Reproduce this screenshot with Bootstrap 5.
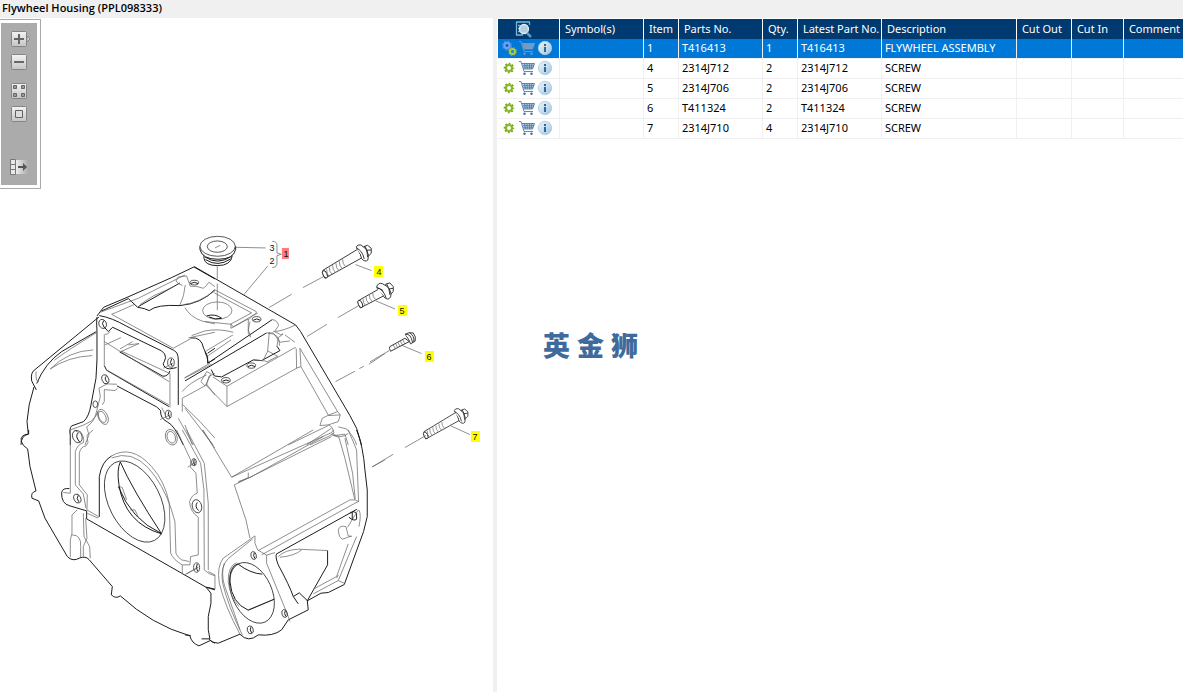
<!DOCTYPE html>
<html lang="en">
<head>
<meta charset="utf-8">
<meta name="viewport" content="width=device-width, initial-scale=1">
<title>Flywheel Housing (PPL098333)</title>
<link href="https://cdn.jsdelivr.net/npm/bootstrap@5.3.0/dist/css/bootstrap.min.css" rel="stylesheet">
<style>
body{font-family:"Noto Sans","Open Sans",sans-serif;font-size:11px;line-height:18px;color:#000;background:#fff}
.titlebar{background:#f0f0f0;font-size:11px;line-height:16px;height:18px;font-family:"Open Sans","Noto Sans",sans-serif;font-weight:600;padding-left:2px}
.tools{top:1px;left:0;border:1px solid #aaa;border-left:0;padding:3px 3px 3px 1px;background:#fff}
.tools-in{background:#ababab;width:36px;height:162px;padding-top:8px}
.icon-btn{border:0;background:none;padding:0;display:block;line-height:0}
.icon-btn svg{display:block}
.tool-gap{margin-top:7px}
.tool-sp{margin-top:13px}
.tool-last{margin-top:37px}
.drawing{display:block;width:100%;height:auto}
.parts-pane{border-left:4px solid #f0f0f0;padding:1px 0 0 1px}
.parts{table-layout:fixed;width:100%;border-collapse:separate;border-spacing:0}
.parts th,.parts td{height:20px;padding:0 0 1px 3px;border-right:1px solid #f0f0f0;border-bottom:1px solid #f0f0f0;white-space:nowrap;line-height:18px;overflow:hidden}
.parts td{line-height:16px}
.parts th{background:#003a70;color:#fff;font-weight:400;border-right-color:#fff;border-bottom:0;padding:0 0 0 5px;line-height:20px}
.parts tr>:last-child{border-right:0}
.parts .picked td{background:#0078d7;color:#fff}
.parts .search-cell{padding:0 10px 0 0}
.row-icons{gap:2px}
.cart-line{stroke:var(--cart,#4c7cae)}
.cart-wheel{fill:var(--cart,#41699a)}
.picked{--cart:#8593ad}
.c-icon{width:62px}.c-symbol{width:84px}.c-num{width:35px}.c-part{width:84px}.c-desc{width:135px}.c-out{width:55px}.c-in{width:52px}
.brandmark{font-family:"Noto Sans CJK SC",sans-serif;font-weight:900;font-size:27px;line-height:32px;color:#3e6a9c;gap:7px;margin:190px 0 0 45px}
.dk{stroke:#1c1c1c;stroke-width:3}
ellipse.dk{stroke-width:2.2}
.th{stroke:#666;stroke-width:2.2}
.bolt .dk{stroke-width:2.6}
.callout{font-family:"Liberation Sans",sans-serif;font-size:9px;text-anchor:middle;fill:#111}
</style>
</head>
<body class="overflow-hidden">
<svg width="0" height="0" class="position-absolute" aria-hidden="true">
<defs>
<linearGradient id="face" x2="0" y2="1"><stop stop-color="#f4f4f4"/><stop offset="1" stop-color="#c4c4c4"/></linearGradient>
<linearGradient id="fade"><stop stop-color="#eee"/><stop offset="1" stop-color="#ababab"/></linearGradient>
<linearGradient id="orb" x2="1" y2="1"><stop stop-color="#eef7fc"/><stop offset="1" stop-color="#9fc4e0"/></linearGradient>
<symbol id="gear" viewBox="0 0 16 16"><circle cx="8" cy="8" r="3" fill="none" stroke="#8aba2c" stroke-width="2.2"/><circle cx="8" cy="8" r="4.500" fill="none" stroke="#7aa822" stroke-width="1.600" stroke-dasharray="1.900 1.634" stroke-dashoffset=".95"/></symbol>
<symbol id="gears" viewBox="0 0 16 16"><circle cx="6" cy="5.500" r="2.600" fill="none" stroke="#6aa5f5" stroke-width="2.400"/><circle cx="6" cy="5.500" r="4.200" fill="none" stroke="#5a8de8" stroke-width="1.600" stroke-dasharray="1.800 1.500"/><circle cx="6" cy="5.500" r="1.300" fill="#2458b8"/><circle cx="11.500" cy="11.500" r="2.500" fill="none" stroke="#a9cf55" stroke-width="2"/><circle cx="11.500" cy="11.500" r="3.700" fill="none" stroke="#93bb40" stroke-width="1.300" stroke-dasharray="1.600 1.300"/><circle cx="11.500" cy="11.500" r="1.200" fill="#4084c4"/></symbol>
<symbol id="cart" viewBox="0 0 16 16"><path d="M3 3.500H15.500L13.500 9H5Z" fill="#a9c3df" fill-opacity=".6"/><path class="cart-line" d="M0 1.500H2L5 11.500H14M3 3.500H15.500L13.500 9H4.300M3.700 5.300H14.800M4 7.200H14.200M5.500 3.500L6.300 9M8 3.500L8.300 9M10.500 3.500V9M13 3.500L12 9" fill="none" stroke-width=".9"/><circle class="cart-wheel" cx="5.500" cy="13.700" r="1.200"/><circle class="cart-wheel" cx="12.500" cy="13.700" r="1.200"/></symbol>
<symbol id="info" viewBox="0 0 16 16"><circle cx="8" cy="8" r="6.700" fill="url(#orb)" stroke="#a9c9e2" stroke-width=".8"/><path d="M8 4v2M8 7v5" fill="none" stroke="#35679d" stroke-width="2"/></symbol>
</defs>
</svg>

<header class="titlebar">Flywheel Housing (PPL098333)</header>
<main class="row g-0">
<section class="col-5 position-relative" aria-label="Drawing">
<svg class="drawing" viewBox="0 18 493 674" fill="none" stroke-linejoin="round" role="img" aria-label="Flywheel housing exploded view">
<!-- left upper housing -->
<g transform="translate(15 225) scale(.3333)">
<path class="dk" d="M246 273L266 247L330 220L470 158L537 126L600 162M260 258L340 221L368 247M246 276Q244 290 246 320V405L243 460L228 540Q222 575 206 590L170 603Q162 610 166 632V660M253 272Q290 278 335 304L476 376M252 276L60 434Q46 442 50 468L64 495M244 320L140 380Q90 415 65 476M57 486Q39 540 36 590L40 628Q18 632 18 660"/>
<path class="dk" d="M368 247Q390 250 403 257Q425 238 495 242Q560 236 600 194M268 307L280 320L293 307L440 378Q452 386 452 398M314 381L444 454Q460 454 465 438M268 422L275 436L462 545M476 376Q490 382 490 405V540M452 398Q448 412 445 416Q446 430 464 432L485 428M306 483L425 546L437 557Q435 580 457 591Q478 600 505 660M600 370L578 385M526 339Q560 335 566 370L578 395V415L600 402"/>
<path class="dk" d="M370 245L495 174"/>
<path class="th" d="M256 262L370 220L510 150M375 239L417 212Q450 198 480 183M511 180Q508 215 495 240M503 182Q490 178 483 168L490 156L515 153L526 184Q545 182 565 190Q576 182 582 172L600 185M510 248Q525 275 560 288L600 297M290 268L305 262L357 239M290 268L475 370L526 342M340 360L372 356L318 380M318 378L465 446M315 372L353 350M268 328V422M270 360L318 338M270 328H276L286 320M268 350L462 470M273 434L462 540M465 446V548M502 500Q520 475 575 450M502 560V520L575 480L582 454L600 446M508 460L590 418M575 478L600 510M502 538Q560 592 600 640M490 580L535 660M106 432Q160 378 235 375M106 432Q160 395 232 392M246 322Q155 378 118 406M63 440Q62 475 72 470M252 490L276 477L306 478M252 490L256 515Q250 540 243 566Q238 590 215 606L222 630L210 660M268 494V530L262 540M308 490L300 497L268 494M166 615L207 600L230 588Q245 573 249 560M440 548L452 570M520 339L600 322"/>
<ellipse class="dk" cx="263" cy="297" rx="11" ry="14" transform="rotate(-25 263 297)"/><path class="dk" d="M266 287q-8 8 2 21"/>
<ellipse class="dk" cx="468" cy="413" rx="10" ry="14"/><path class="th" d="M445 430L475 414M436 584L467 569"/><path class="dk" d="M470 402q-8 10 2 22"/>
<ellipse class="dk" cx="271" cy="463" rx="10" ry="14" transform="rotate(-20 271 463)"/><path class="dk" d="M274 454q-8 8 4 19"/>
<ellipse class="dk" cx="241" cy="538" rx="7" ry="10"/>
<ellipse class="dk" cx="460" cy="569" rx="9" ry="13"/><path class="dk" d="M462 559q-6 10 3 20"/>
<ellipse class="dk" cx="187" cy="635" rx="14" ry="19" transform="rotate(-20 187 635)"/><path class="dk" d="M191 623q-13 10 3 28"/>
<ellipse class="th" cx="264" cy="576" rx="14" ry="24" transform="rotate(-25 264 576)"/><ellipse class="th" cx="262" cy="576" rx="10" ry="18" transform="rotate(-25 262 576)"/>
<ellipse class="th" cx="469" cy="637" rx="17" ry="24" transform="rotate(-20 469 637)"/><ellipse class="th" cx="469" cy="637" rx="12" ry="18" transform="rotate(-20 469 637)"/>
</g>
<!-- right upper housing, plug and bolts -->
<g transform="translate(185 225) scale(.3333)">
<path class="dk" d="M28 125L332 300L347 320L495 572L515 610L530 660M60 380L66 396L70 414L262 284M0 468L245 324M79 434L88 453L110 456L205 405L230 407L285 377L276 364"/>
<path class="th" d="M195 290L190 315L197 335M332 300Q290 320 265 320M0 458L75 415M0 238Q35 236 90 198M90 195L214 260Q216 264 210 268L145 306L138 297L200 264L88 204M60 290L138 298M138 298V310L190 282V325L197 337M20 332L60 318Q100 310 145 322M64 378L144 330M70 392L138 345M192 284Q200 270 218 265M262 284Q278 286 281 302L270 318M253 322L248 380L235 405M248 378L278 394L248 410M246 324H265L285 352L315 348M270 320L288 330Q305 320 280 338L276 365M300 330L330 352M250 325Q285 325 284 362M79 446L62 480L126 545L335 430L334 372M126 545V484L84 456M126 484L330 368L334 370M345 370L458 560M345 370L348 425L430 570M334 430L348 425M458 560L466 570L430 572M458 560Q430 570 412 580L405 602L430 600L460 590L466 570M430 602L310 660M440 610L365 660M430 600Q445 605 447 625L430 635L375 660M460 606L485 612Q510 640 515 660M447 632L480 628L490 660M0 550L84 660M0 600L22 660M48 470L65 440L77 446M48 470L60 483M205 405L240 408L250 412"/>
<ellipse class="th" cx="97" cy="257" rx="44" ry="26"/><path class="dk" d="M65 273Q90 265 110 280M72 276Q90 286 110 280"/>
<ellipse class="dk" cx="28" cy="173" rx="13" ry="7"/><path class="dk" d="M17 176q11-8 22 0"/><ellipse class="dk" cx="215" cy="283" rx="13" ry="8"/><path class="dk" d="M205 286q10-8 21 0"/><ellipse class="dk" cx="199" cy="422" rx="13" ry="8"/><path class="dk" d="M189 425q10-8 21 0"/><ellipse class="dk" cx="123" cy="466" rx="13" ry="8"/><path class="dk" d="M113 469q10-8 21 0"/>
<path class="th" d="M97 124V162M97 176V256M150 67L242 69M248 124L176 210M252 248L320 208M354 188L425 150M366 335L426 298M459 278L525 240M452 470L510 439M523 431L537 424M552 418L600 386M512 119L560 137"/>
<g fill="#fff"><path class="dk" d="M57 90V100Q60 122 98 122Q138 122 142 92Z"/><path class="dk" d="M60 96Q98 122 140 94M62 104Q98 128 137 102"/><path class="dk" d="M45 64V74Q52 103 99 103Q146 103 152 74V64"/><ellipse class="dk" cx="98" cy="64" rx="53" ry="30"/><ellipse class="dk" cx="97" cy="65" rx="30" ry="17"/><path class="th" d="M90 69L106 61"/></g>
<path class="th" d="M262 49Q276 50 276 60V84L289 88L276 92V118Q274 128 262 128"/>
</g>
<defs><g id="bolt" class="bolt" fill="#fff">
<path class="dk" d="M518 73L414 136Q412 146 420 160L532 98Z"/>
<path class="th" d="M425 133q0 15 8 22m0-28q0 15 9 22m1-28q0 15 9 22m1-28q0 15 9 22m1-28q0 15 9 22m1-28q0 15 9 22"/><ellipse class="dk" cx="420" cy="148" rx="6" ry="12" transform="rotate(-25 420 148)"/>
<path class="dk" d="M537 65L548 61L559 70V85L548 96L532 91Z"/><path class="dk" d="M514 66Q517 58 528 60L543 72Q555 90 549 105Q541 113 530 101L524 80Z"/><path class="dk" d="M540 63L546 76L559 75M546 76L548 96M514 70Q532 75 538 102"/>
</g></defs>
<use href="#bolt" transform="translate(185 225) scale(.3333)"/>
<use href="#bolt" transform="translate(298.600 390.600) scale(.303)"/>
<g class="bolt" fill="#fff" transform="translate(370 230) scale(.3333)">
<path class="dk" d="M27 177L-31 210Q-37 216 -29 234L41 198Z"/><path class="th" d="M-21 206q0 14 8 21m1-28q0 15 9 22m1-28q0 15 9 22m1-28q0 15 9 22"/><path class="dk" d="M48 162L60 159L70 170V185L60 195L45 193Z"/><path class="dk" d="M20 172Q24 157 37 161L52 170Q67 185 62 201Q54 214 42 201L37 180Z"/><path class="dk" d="M51 163L57 177L70 175M57 177L60 195M20 174Q40 176 49 205"/><ellipse class="dk" cx="-29" cy="222" rx="6" ry="12" transform="rotate(-25 -29 222)"/>
<path class="dk" d="M105 325L60 350Q56 354 62 364L118 335Z"/><path class="th" d="M70 345l7 13m0-17l7 13m0-17l7 13m0-17l7 13m0-17l7 13"/><path class="dk" d="M106 313Q116 306 130 309Q139 320 136 333L122 342L117 330Z"/><path class="dk" d="M106 313Q123 310 128 338M119 309Q134 317 132 337"/>
<path class="th" d="M18 213L75 237M95 346L155 371M243 588L300 614M0 396L58 362M7 711L70 673M105 653L168 617"/>
</g>
<!-- left lower housing -->
<g transform="translate(15 430) scale(.3333)">
<path class="dk" d="M41 0V12Q14 15 19 35Q23 48 38 57L45 110L63 183Q46 188 51 205L71 213L90 265L157 380Q173 397 195 384Q212 378 222 389L292 470L289 495Q302 508 316 498Q410 585 525 618Q530 640 552 648L586 632L600 640M560 627H585L580 600V560L588 520V490L573 472L500 430L215 267V243L165 228Q138 222 140 187Q143 174 163 176M253 261V140Q260 95 290 78M316 96Q305 120 312 165Q330 280 440 312M316 96Q350 175 440 312M573 472L600 480M310 170Q350 270 438 310"/>
<path class="th" d="M166 0V190L145 188M177 0L190 8M194 3Q210 20 205 38Q187 44 181 65V165L205 192L213 235M235 0L216 16L219 38L213 48Q197 50 193 70V165L217 195L216 240L250 260M187 240L171 255V310L166 330V382M205 250L207 320L224 350L226 385M171 315Q200 315 197 350V382M212 265L216 325L205 350V380M217 250L247 264L253 260M290 78Q350 43 410 110Q450 155 463 220L467 370Q475 390 502 405L525 405L527 380L550 375V262Q525 245 524 215Q530 195 547 190L543 130L527 112V90L485 0M290 84Q350 60 401 115Q445 165 468 235L480 275L483 370Q487 382 500 390L523 395M502 405V432M516 432L550 412M518 112L545 95M502 0L557 100L567 180L568 420Q580 433 600 438M515 0L568 100L580 220V420M562 0L600 55"/>
<ellipse class="dk" cx="359" cy="215" rx="77" ry="131" transform="rotate(-27 359 215)"/>
<ellipse class="dk" cx="187" cy="206" rx="10" ry="14" transform="rotate(-25 187 206)"/><path class="dk" d="M190 196q-8 10 2 20"/>
<ellipse class="dk" cx="537" cy="97" rx="7" ry="11"/><path class="dk" d="M538 88q-4 9 1 18M547 218q-9 12 4 24"/><ellipse class="dk" cx="546" cy="229" rx="14" ry="20" transform="rotate(-15 546 229)"/><ellipse class="dk" cx="545" cy="413" rx="9" ry="14"/><path class="dk" d="M547 402q-6 12 1 22"/>
<path class="th" d="M314 170L322 173L335 210M345 240L360 240L372 266"/>
</g>
<!-- right lower housing -->
<g transform="translate(185 430) scale(.3333)">
<path class="dk" d="M515 0Q535 50 540 120L547 180V260L536 305L478 464L430 488L408 490L367 513M516 238L275 372Q270 380 280 405Q315 470 325 500L343 489L367 512L370 540L310 570L290 600Q265 620 220 615Q190 640 165 613L100 640Q80 640 72 628M65 472L90 478M0 615L17 617M367 513L428 405V362M325 500L340 522"/>
<path class="th" d="M54 0L140 142L440 8L445 0M140 142L385 0M148 165L240 120L440 20M160 155L195 143L415 20M190 128V143L160 158M148 165L183 270L195 325M440 10Q470 30 490 10M440 15L462 22L480 85L510 210M490 0L515 60L521 215L510 210L495 210L220 362M521 215L510 220L230 375M480 25L503 130L511 207M280 380Q300 360 340 358L428 362M285 382Q330 378 350 360M385 478L455 440L490 342M385 492L460 452L478 460M460 435L455 445M515 320L460 452M460 300Q465 285 483 290L490 318L500 320M460 300Q462 325 473 328L500 318M488 292L520 240M522 240Q530 255 522 290M210 318V340L218 360L245 376V400L310 560L315 575M245 376L270 368M210 318L115 385Q95 410 103 460Q120 530 165 613M203 327L130 386Q105 410 113 460Q130 530 172 615M118 400Q108 430 118 465L148 550L165 600M70 425L90 435V478M0 434L40 412M190 540L268 508M562 111L600 90"/>
<ellipse class="dk" cx="201" cy="489" rx="60" ry="96" transform="rotate(-24 201 489)"/><path class="dk" d="M160 403Q195 430 232 433M160 401Q132 410 135 455Q140 520 190 541L268 508"/><path class="th" d="M155 398Q128 410 130 455Q135 500 162 530"/>
<ellipse class="dk" cx="206" cy="377" rx="8" ry="12" transform="rotate(-15 206 377)"/><path class="dk" d="M208 369q-5 8 2 17"/><ellipse class="dk" cx="299" cy="551" rx="8" ry="12" transform="rotate(-15 299 551)"/><path class="dk" d="M301 543q-5 8 2 17"/><ellipse class="dk" cx="196" cy="600" rx="9" ry="12" transform="rotate(-15 196 600)"/><path class="dk" d="M198 592q-5 8 2 17"/>
<path class="dk" d="M495 250Q509 240 515 252V268Q507 275 492 262M502 247V270"/>
</g>
<path fill="#ff0" d="M374 266h9v11h-9zM398 305h9v11h-9zM425 351h9v11h-9zM471 431h9v11h-9z"/><path fill="#ff7b7b" d="M282 248h7v11h-7z"/>
<g class="callout"><text x="272" y="251">3</text><text x="272" y="264">2</text><text x="286" y="257">1</text><text x="379" y="275">4</text><text x="402" y="314">5</text><text x="429" y="360">6</text><text x="475" y="440">7</text></g>
</svg>
<div class="tools position-absolute"><div class="tools-in">
<button class="icon-btn" aria-label="Zoom in"><svg width="36" height="16"><path d="M26 5l3 3-3 3z" fill="#ddd" stroke="#888"/><rect x="10.500" y=".5" width="15" height="15" rx="1" fill="url(#face)" stroke="#858585"/><path d="M13 8h10M18 3v10" stroke="#666" stroke-width="2"/></svg></button>
<button class="icon-btn tool-gap" aria-label="Zoom out"><svg width="36" height="16"><path d="M12 5l-3 3 3 3z" fill="#ddd" stroke="#888"/><rect x="10.500" y=".5" width="15" height="15" rx="1" fill="url(#face)" stroke="#858585"/><path d="M13 8h10" stroke="#666" stroke-width="2"/></svg></button>
<button class="icon-btn tool-sp" aria-label="Thumbnails"><svg width="36" height="16"><rect x="10.500" y=".5" width="15" height="15" rx="1" fill="url(#face)" stroke="#858585"/><path d="M12.500 2.500h3v3h-3zM20.500 2.500h3v3h-3zM12.500 10.500h3v3h-3zM20.500 10.500h3v3h-3z" fill="#999" stroke="#666"/></svg></button>
<button class="icon-btn tool-gap" aria-label="Fit to window"><svg width="36" height="16"><rect x="10.500" y=".5" width="15" height="15" rx="1" fill="url(#face)" stroke="#858585"/><path d="M14.500 4.500h7v7h-7z" fill="#ddd" stroke="#606060"/></svg></button>
<button class="icon-btn tool-last" aria-label="Hide list"><svg width="36" height="16"><path d="M9.500.5h5v15h-5z" fill="#e8e8e8" stroke="#777"/><path d="M9 5.500h5M9 10.500h5" stroke="#777"/><path d="M15 1h12v14H15z" fill="url(#fade)"/><path d="M17 8h6" stroke="#555" stroke-width="2"/><path d="M22 4l4 4-4 4z" fill="#555"/></svg></button>
</div></div>
</section>

<section class="col-7 parts-pane overflow-hidden vh-100" aria-label="Parts list">
<table class="parts">
<colgroup><col class="c-icon"><col class="c-symbol"><col class="c-num"><col class="c-part"><col class="c-num"><col class="c-part"><col class="c-desc"><col class="c-out"><col class="c-in"><col></colgroup>
<thead><tr><th class="search-cell" aria-label="Search"><button class="icon-btn mx-auto" aria-label="Search parts"><svg width="18" height="18"><path d="M2 2h14M2.500 2v13H9M4 5.500h2M4 8.500h1M4 11.500h2M15.500 2v3" fill="none" stroke="#7ab4d8" stroke-width="1.300"/><circle cx="10" cy="9" r="4.500" fill="#b5cede" stroke="#e0edf5" stroke-width="1.300"/><path d="M13 13l4 4" stroke="#5c9ac5" stroke-width="2.500"/></svg></button></th><th>Symbol(s)</th><th>Item</th><th>Parts No.</th><th>Qty.</th><th>Latest Part No.</th><th>Description</th><th>Cut Out</th><th>Cut In</th><th>Comment</th></tr></thead>
<tbody>
<tr class="picked"><td><div class="d-flex row-icons"><button class="icon-btn" aria-label="Assembly"><svg width="16" height="16"><use href="#gears"/></svg></button><button class="icon-btn" aria-label="Add to cart"><svg width="16" height="16"><use href="#cart"/></svg></button><button class="icon-btn" aria-label="Details"><svg width="16" height="16"><use href="#info"/></svg></button></div></td><td></td><td>1</td><td>T416413</td><td>1</td><td>T416413</td><td>FLYWHEEL ASSEMBLY</td><td></td><td></td><td></td></tr>
<tr><td><div class="d-flex row-icons"><button class="icon-btn" aria-label="Part"><svg width="16" height="16"><use href="#gear"/></svg></button><button class="icon-btn" aria-label="Add to cart"><svg width="16" height="16"><use href="#cart"/></svg></button><button class="icon-btn" aria-label="Details"><svg width="16" height="16"><use href="#info"/></svg></button></div></td><td></td><td>4</td><td>2314J712</td><td>2</td><td>2314J712</td><td>SCREW</td><td></td><td></td><td></td></tr>
<tr><td><div class="d-flex row-icons"><button class="icon-btn" aria-label="Part"><svg width="16" height="16"><use href="#gear"/></svg></button><button class="icon-btn" aria-label="Add to cart"><svg width="16" height="16"><use href="#cart"/></svg></button><button class="icon-btn" aria-label="Details"><svg width="16" height="16"><use href="#info"/></svg></button></div></td><td></td><td>5</td><td>2314J706</td><td>2</td><td>2314J706</td><td>SCREW</td><td></td><td></td><td></td></tr>
<tr><td><div class="d-flex row-icons"><button class="icon-btn" aria-label="Part"><svg width="16" height="16"><use href="#gear"/></svg></button><button class="icon-btn" aria-label="Add to cart"><svg width="16" height="16"><use href="#cart"/></svg></button><button class="icon-btn" aria-label="Details"><svg width="16" height="16"><use href="#info"/></svg></button></div></td><td></td><td>6</td><td>T411324</td><td>2</td><td>T411324</td><td>SCREW</td><td></td><td></td><td></td></tr>
<tr><td><div class="d-flex row-icons"><button class="icon-btn" aria-label="Part"><svg width="16" height="16"><use href="#gear"/></svg></button><button class="icon-btn" aria-label="Add to cart"><svg width="16" height="16"><use href="#cart"/></svg></button><button class="icon-btn" aria-label="Details"><svg width="16" height="16"><use href="#info"/></svg></button></div></td><td></td><td>7</td><td>2314J710</td><td>4</td><td>2314J710</td><td>SCREW</td><td></td><td></td><td></td></tr>
</tbody>
</table>
<div class="brandmark d-flex" lang="zh-CN"><span>英</span><span>金</span><span>狮</span></div>
</section>
</main>
<script src="https://cdn.jsdelivr.net/npm/bootstrap@5.3.0/dist/js/bootstrap.bundle.min.js"></script>
</body>
</html>
